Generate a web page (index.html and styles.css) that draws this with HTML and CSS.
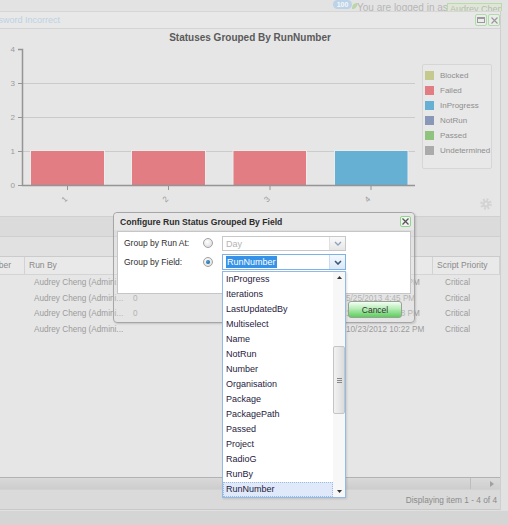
FILE: index.html
```html
<!DOCTYPE html>
<html lang="en">
<head>
  <meta charset="UTF-8">
  <meta name="viewport" content="width=device-width, initial-scale=1.0">
  <title>Statuses Grouped By RunNumber</title>
  <link rel="stylesheet" href="styles.css">
</head>
<body>
  <div class="topbar">
    <span class="badge">100</span>
    <svg class="leaf" width="7" height="8" viewBox="0 0 7 8"><path d="M1 7C1 3 3 1 6.5 1C6.5 5 4 7 1 7Z" fill="#b9d6a6"/></svg>
    <span class="login-text">You are logged in as</span>
    <span class="user-box">Audrey Cheng</span>
  </div>

  <div class="window">
    <div class="win-head">
      <span class="win-title">Password Incorrect</span>
      <span class="win-btn"><svg width="8" height="6" viewBox="0 0 8 6"><rect x="0.5" y="0.5" width="7" height="5" fill="none" stroke="#9a9a9a"/><rect x="0.5" y="0.5" width="7" height="1.5" fill="#9a9a9a"/></svg></span>
      <span class="win-btn"><svg width="7" height="7" viewBox="0 0 7 7"><path d="M0.5 0.5L6.5 6.5M6.5 0.5L0.5 6.5" stroke="#9a9a9a" stroke-width="1.2"/></svg></span>
    </div>

    <div class="chart-panel">
      <div class="chart-title">Statuses Grouped By RunNumber</div>
      <div class="chart-body">
        <svg class="plot" width="418" height="173" viewBox="0 43 418 173">
          <g class="grid-lines">
            <line x1="22" y1="83.5" x2="415" y2="83.5"/>
            <line x1="22" y1="117.5" x2="415" y2="117.5"/>
            <line x1="22" y1="151.5" x2="415" y2="151.5"/>
          </g>
          <g class="bars">
            <rect x="30.5" y="150.5" width="74" height="35" fill="#e27d83"/>
            <rect x="131.5" y="150.5" width="74" height="35" fill="#e27d83"/>
            <rect x="233" y="150.5" width="73.5" height="35" fill="#e27d83"/>
            <rect x="334.5" y="150.5" width="73.5" height="35" fill="#66b0d4"/>
          </g>
          <path class="axis" d="M18 49.5H22.5V185.5H415"/>
          <path class="ticks" d="M18 83.5H22M18 117.5H22M18 151.5H22M18 185.5H22M67.5 186V190M168.5 186V190M270 186V190M371 186V190"/>
          <g class="y-labels" text-anchor="end">
            <text x="15" y="51.5">4</text>
            <text x="15" y="85.8">3</text>
            <text x="15" y="119.8">2</text>
            <text x="15" y="153.8">1</text>
            <text x="15" y="187.8">0</text>
          </g>
          <g class="x-labels" text-anchor="end">
            <text transform="translate(68 199.5) rotate(-45)">1</text>
            <text transform="translate(169 199.5) rotate(-45)">2</text>
            <text transform="translate(270.5 199.5) rotate(-45)">3</text>
            <text transform="translate(371 199.5) rotate(-45)">4</text>
          </g>
        </svg>
        <div class="chart-side">
          <ul class="legend">
            <li><i class="swatch" style="background:#c5c98e"></i>Blocked</li>
            <li><i class="swatch" style="background:#e27d83"></i>Failed</li>
            <li><i class="swatch" style="background:#66b0d4"></i>InProgress</li>
            <li><i class="swatch" style="background:#8898b6"></i>NotRun</li>
            <li><i class="swatch" style="background:#90c47e"></i>Passed</li>
            <li><i class="swatch" style="background:#ababab"></i>Undetermined</li>
          </ul>
          <svg class="gear" width="12" height="12" viewBox="0 0 12 12">
            <circle cx="6" cy="6" r="4.6" fill="none" stroke="#d3d3d3" stroke-width="2.4" stroke-dasharray="1.9 1.7"/>
            <circle cx="6" cy="6" r="3.6" fill="#d3d3d3"/>
            <circle cx="6" cy="6" r="1.4" fill="#e6e6e6"/>
          </svg>
        </div>
      </div>
    </div>

    <div class="toolbar"></div>
    <div class="subbar"></div>

    <div class="grid-head">
      <div class="hcell first">Run Number</div>
      <div class="hcell">Run By</div>
      <div class="hcell">Value</div>
      <div class="hcell">Run At</div>
      <div class="hcell">Script Priority</div>
    </div>
    <div class="grid-rows">
      <div class="row">
        <span></span><span class="by">Audrey Cheng (Admini...</span><span class="val"></span><span class="date">10/23/2012 9:41 PM</span><span class="prio">Critical</span>
      </div>
      <div class="row">
        <span></span><span class="by">Audrey Cheng (Admini...</span><span class="val">0</span><span class="date">5/25/2013 4:45 PM</span><span class="prio">Critical</span>
      </div>
      <div class="row">
        <span></span><span class="by">Audrey Cheng (Admini...</span><span class="val">0</span><span class="date">10/23/2012 9:38 PM</span><span class="prio">Critical</span>
      </div>
      <div class="row">
        <span></span><span class="by">Audrey Cheng (Admini...</span><span class="val"></span><span class="date">10/23/2012 10:22 PM</span><span class="prio">Critical</span>
      </div>
    </div>
    <div class="hscroll">
      <div class="hthumb"></div>
      <svg class="harrow" width="4" height="6" viewBox="0 0 4 6"><path d="M0 0L4 3L0 6Z" fill="#a0a0a0"/></svg>
    </div>
    <div class="paging">Displaying item 1 - 4 of 4</div>
  </div>
  <div class="bottom-strip"></div>

  <!-- dialog over the grid -->
  <div class="dialog">
    <div class="dlg-head">
      <span class="dlg-title">Configure Run Status Grouped By Field</span>
      <span class="dlg-close"><svg width="7" height="7" viewBox="0 0 7 7"><path d="M0.5 0.5L6.5 6.5M6.5 0.5L0.5 6.5" stroke="#555" stroke-width="1.3"/></svg></span>
    </div>
    <div class="dlg-body">
      <div class="form-row">
        <label class="form-label">Group by Run At:</label>
        <span class="radio"></span>
        <div class="combo disabled">
          <span class="combo-text">Day</span>
          <span class="combo-btn"><svg width="8" height="5" viewBox="0 0 8 5"><path d="M1 1L4 4L7 1" fill="none" stroke="#8fa3ba" stroke-width="1.4"/></svg></span>
        </div>
      </div>
      <div class="form-row">
        <label class="form-label">Group by Field:</label>
        <span class="radio checked"></span>
        <div class="combo focused">
          <span class="combo-text"><span class="sel">RunNumber</span></span>
          <span class="combo-btn"><svg width="8" height="5" viewBox="0 0 8 5"><path d="M1 1L4 4L7 1" fill="none" stroke="#3b5878" stroke-width="1.6"/></svg></span>
        </div>
      </div>
    </div>
    <div class="dlg-foot">
      <button class="btn">OK</button>
      <button class="btn">Cancel</button>
    </div>
  </div>

  <div class="picker">
    <ul class="pick-list">
      <li>InProgress</li>
      <li>Iterations</li>
      <li>LastUpdatedBy</li>
      <li>Multiselect</li>
      <li>Name</li>
      <li>NotRun</li>
      <li>Number</li>
      <li>Organisation</li>
      <li>Package</li>
      <li>PackagePath</li>
      <li>Passed</li>
      <li>Project</li>
      <li>RadioG</li>
      <li>RunBy</li>
      <li class="current">RunNumber</li>
    </ul>
    <div class="vscroll">
      <svg class="varrow" width="5" height="3" viewBox="0 0 5 3"><path d="M0 3L2.5 0L5 3Z" fill="#333"/></svg>
      <div class="vtrack">
        <div class="vthumb"><svg width="5" height="5" viewBox="0 0 5 5"><path d="M0 0.5H5M0 2.5H5M0 4.5H5" stroke="#888"/></svg></div>
      </div>
      <svg class="varrow" width="5" height="3" viewBox="0 0 5 3"><path d="M0 0L5 0L2.5 3Z" fill="#333"/></svg>
    </div>
  </div>
</body>
</html>
```

FILE: styles.css
```css
body {
    margin: 0;
    width: 508px;
    height: 525px;
    overflow: hidden;
    background-color: #e2e2e2;
    font-family: 'Liberation Sans', Arial, sans-serif;
    font-size: 8.5px;
    color: #999;
    position: relative;
}
.topbar {
    height: 11px;
    overflow: hidden;
    display: flex;
    justify-content: flex-end;
    align-items: flex-start;
    padding-right: 6px;
    background-color: #e3e3e3;
}
.badge {
    width: 19px;
    height: 9px;
    line-height: 9px;
    border-radius: 5px;
    background-color: #bcd2e6;
    color: #f4f8fb;
    font-size: 7px;
    font-weight: bold;
    text-align: center;
}
.leaf {
    margin: 2px 0 0 -1px;
}
.login-text {
    font-size: 10px;
    line-height: 12px;
    margin: 2px 0 0 -1px;
    color: #b6b6b6;
    width: 90px;
    white-space: nowrap;
}
.user-box {
    width: 51px;
    height: 9px;
    margin-top: 3px;
    padding-left: 2px;
    border: 1px solid #b8dca6;
    background-color: #dfe6d8;
    color: #b4bcae;
    font-size: 9px;
    line-height: 10px;
    white-space: nowrap;
    overflow: hidden;
}
.window {
    width: 500px;
    height: 499px;
    border-right: 1px solid #cfcfcf;
    display: flex;
    flex-direction: column;
    background-color: #e6e6e6;
}
.win-head {
    height: 16px;
    border-top: 1px solid #d6d6d6;
    display: flex;
    align-items: center;
    gap: 1px;
    background-color: #e8e8e8;
}
.win-title {
    flex: 1;
    font-size: 9px;
    color: #bcd2e4;
    text-indent: -17px;
    white-space: nowrap;
    overflow: hidden;
}
.win-btn {
    width: 10px;
    height: 10px;
    border: 1px solid #b0dca8;
    border-radius: 2px;
    background-color: #ececec;
    display: flex;
    align-items: center;
    justify-content: center;
}
.chart-panel {
    height: 188px;
    border-top: 1px solid #d4d4d4;
    box-sizing: border-box;
    background-color: #e6e6e6;
}
.chart-title {
    height: 14px;
    padding-top: 2px;
    line-height: 14px;
    text-align: center;
    font-size: 10px;
    font-weight: bold;
    color: #5a5a5a;
    box-sizing: border-box;
}
.chart-body {
    display: flex;
    height: 173px;
}
.plot {
    display: block;
    flex-shrink: 0;
}
.plot text {
    font-family: 'Liberation Sans', Arial, sans-serif;
    font-size: 8px;
    fill: #9a9a9a;
}
.grid-lines line {
    stroke: #cbcbcb;
    stroke-width: 1;
}
.bars rect {
    stroke: #ececec;
    stroke-width: 1;
}
.axis {
    fill: none;
    stroke: #959595;
    stroke-width: 1.5;
}
.ticks {
    stroke: #959595;
    stroke-width: 1;
}
.chart-side {
    flex: 1;
    display: flex;
    flex-direction: column;
}
.legend {
    list-style: none;
    margin: 21px 0 0 4px;
    padding: 3px 0 0 2px;
    width: 70px;
    height: 105px;
    box-sizing: border-box;
    border: 1px solid #d6d6d6;
    border-radius: 2px;
    background-color: #e8e8e8;
}
.legend li {
    height: 15px;
    display: flex;
    align-items: center;
    gap: 6px;
    font-size: 8px;
    color: #8e8e8e;
    white-space: nowrap;
}
.swatch {
    width: 9px;
    height: 9px;
    flex-shrink: 0;
}
.gear {
    margin-top: auto;
    margin-bottom: 6px;
    margin-left: 62px;
}
.toolbar {
    height: 20px;
    border-top: 1px solid #d0d0d0;
    box-sizing: border-box;
    background-color: #dbdbdb;
}
.subbar {
    height: 20px;
    border-top: 1px solid #cfcfcf;
    box-sizing: border-box;
    background-color: #e1e1e1;
}
.grid-head, .row {
    display: grid;
    grid-template-columns: 25px 103px 212px 93px 67px;
}
.grid-head {
    height: 19px;
    border-top: 1px solid #cbcbcb;
    border-bottom: 1px solid #d4d4d4;
    box-sizing: border-box;
    background-color: #e9e9e9;
    line-height: 17px;
    color: #8a8a8a;
}
.hcell {
    padding-left: 4px;
    border-right: 1px solid #d2d2d2;
    white-space: nowrap;
    overflow: hidden;
}
.hcell.first {
    padding: 0 13px 0 0;
    text-align: right;
    direction: rtl;
}
.grid-rows {
    flex: 1;
}
.row {
    height: 15.6px;
    line-height: 15.6px;
    font-size: 8.2px;
    color: #9c9c9c;
    white-space: nowrap;
}
.row span {
    overflow: hidden;
}
.row .by {
    padding-left: 9px;
}
.row .val {
    padding-left: 5px;
}
.row .date {
    padding-left: 6px;
    overflow: visible;
}
.row .prio {
    padding-left: 12px;
}
.hscroll {
    height: 12px;
    border-top: 1px solid #b2b2b2;
    box-sizing: border-box;
    display: flex;
    align-items: stretch;
    background: linear-gradient(#dadada, #cfcfcf);
}
.hthumb {
    width: 470px;
    border-right: 1px solid #bdbdbd;
    background: linear-gradient(#d9d9d9, #cdcdcd);
}
.harrow {
    align-self: center;
    margin-left: 19px;
}
.paging {
    height: 21px;
    border-top: 1px solid #d2d2d2;
    border-bottom: 1px solid #c9c9c9;
    box-sizing: border-box;
    background-color: #dadada;
    text-align: right;
    padding-right: 3px;
    line-height: 21px;
    font-size: 8.3px;
    color: #8a8a8a;
}
.bottom-strip {
    height: 15px;
    border-top: 1px solid #e0e0e0;
    background-color: #d5d5d5;
}

/* dialog */
.dialog {
    position: absolute;
    left: 113px;
    top: 212px;
    width: 302px;
    height: 111px;
    box-sizing: border-box;
    border: 1px solid #a6a6a6;
    border-radius: 4px;
    background-color: rgba(230, 230, 230, 0.3);
    box-shadow: 1px 1px 2px rgba(0, 0, 0, 0.15);
    display: flex;
    flex-direction: column;
}
.dlg-head {
    height: 17px;
    display: flex;
    align-items: center;
    padding: 0 3px 0 6px;
    background-color: #e7e7e7;
    border-radius: 4px 4px 0 0;
}
.dlg-title {
    flex: 1;
    font-size: 8.6px;
    font-weight: bold;
    color: #2c2c2c;
    white-space: nowrap;
}
.dlg-close {
    width: 9px;
    height: 9px;
    border: 1px solid #8fd58a;
    border-radius: 2px;
    background-color: #f2f2f2;
    display: flex;
    align-items: center;
    justify-content: center;
}
.dlg-body {
    margin: 1px 3px 0;
    height: 63px;
    box-sizing: border-box;
    border: 1px solid #c6c6c6;
    background-color: #fff;
    padding: 3px 0 0 6px;
    display: flex;
    flex-direction: column;
    gap: 3px;
}
.form-row {
    height: 16px;
    display: flex;
    align-items: center;
}
.form-label {
    width: 79px;
    color: #2e2e2e;
    font-size: 8.5px;
}
.radio {
    width: 10px;
    height: 10px;
    box-sizing: border-box;
    border-radius: 50%;
    border: 1px solid #a2a2a2;
    background: radial-gradient(circle at 40% 35%, #fff, #d6d6d6);
    margin-right: 9px;
    display: flex;
    align-items: center;
    justify-content: center;
}
.radio.checked::after {
    content: '';
    width: 4px;
    height: 4px;
    border-radius: 50%;
    background: radial-gradient(circle at 40% 35%, #4aa3dc, #0f4f80);
}
.combo {
    width: 124px;
    height: 16px;
    box-sizing: border-box;
    border: 1px solid #c8c8c8;
    display: flex;
    background-color: #fff;
}
.combo.disabled {
    height: 15px;
}
.combo.focused {
    border-color: #7eb1e6;
}
.combo-text {
    flex: 1;
    padding-left: 3px;
    line-height: 14px;
    font-size: 9px;
    color: #b4b4b4;
}
.combo .sel {
    background-color: #3592e6;
    color: #fff;
    padding: 1px 1px;
}
.combo-btn {
    width: 15px;
    display: flex;
    align-items: center;
    justify-content: center;
    background: linear-gradient(#fafafa, #e6e6e6);
    border-left: 1px solid #e0e0e0;
}
.combo.focused .combo-btn {
    background: linear-gradient(#f4f9ff, #dbe8f6);
    border-left-color: #c8dcf2;
}
.dlg-foot {
    flex: 1;
    display: flex;
    justify-content: flex-end;
    align-items: flex-start;
    gap: 6px;
    padding: 7px 12px 0 0;
}
.btn {
    width: 54px;
    height: 17px;
    padding: 0;
    border: 1px solid #98a298;
    border-radius: 3px;
    background: linear-gradient(#f4fff4, #b6ecb6 45%, #5ccf5c);
    font-family: 'Liberation Sans', Arial, sans-serif;
    font-size: 8.5px;
    color: #333;
}

/* field picker */
.picker {
    position: absolute;
    left: 222px;
    top: 271px;
    width: 124px;
    height: 227px;
    box-sizing: border-box;
    border: 1px solid #93b9e6;
    background-color: #fff;
    display: flex;
    box-shadow: 1px 1px 2px rgba(0, 0, 0, 0.12);
}
.pick-list {
    list-style: none;
    margin: 0;
    padding: 0;
    flex: 1;
}
.pick-list li {
    height: 15px;
    line-height: 15px;
    padding-left: 3px;
    font-size: 9px;
    color: #1f1a3e;
    box-sizing: border-box;
}
.pick-list li.current {
    background-color: #dfe9f9;
    border: 1px dotted #9dbbe2;
    line-height: 13px;
    padding-left: 2px;
}
.vscroll {
    width: 12px;
    display: flex;
    flex-direction: column;
    align-items: center;
    background-color: #f7f7f7;
}
.varrow {
    margin: 4px 0;
    flex-shrink: 0;
}
.vtrack {
    flex: 1;
    width: 100%;
}
.vthumb {
    margin-top: 63px;
    height: 68px;
    box-sizing: border-box;
    border: 1px solid #c4c4c4;
    border-radius: 2px;
    background: linear-gradient(90deg, #f2f2f2, #dcdcdc);
    display: flex;
    align-items: center;
    justify-content: center;
}
```
